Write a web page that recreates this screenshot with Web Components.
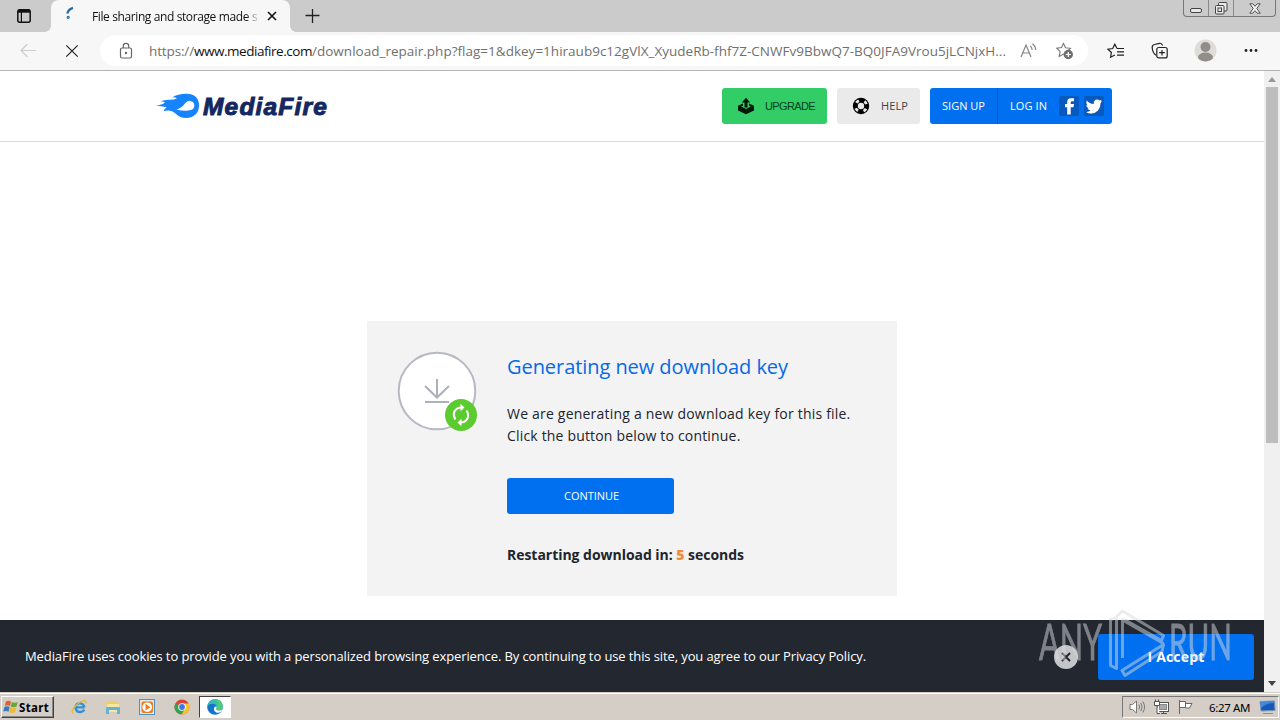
<!DOCTYPE html>
<html lang="en">
<head>
<meta charset="utf-8">
<title>File sharing and storage made simple</title>
<style>
  html, body { margin: 0; height: 720px; overflow: hidden; }
  body { font-family: "Open Sans", "Noto Sans", sans-serif; background: #fff; }
</style>
</head>
<body>
<desktop-shell>
  <browser-tabs slot="window"></browser-tabs>
  <browser-toolbar slot="window"></browser-toolbar>
  <web-view slot="window">
    <site-header></site-header>
    <key-card>
      <span slot="title">Generating new download key</span>
      <fit-text slot="body" width="343.5">We are generating a new download key for this file.</fit-text>
      <fit-text slot="body" width="233.5">Click the button below to continue.</fit-text>
      <span slot="action">CONTINUE</span>
    </key-card>
    <cookie-bar slot="footer"></cookie-bar>
  </web-view>
  <task-bar slot="taskbar"></task-bar>
  <run-watermark slot="overlay"></run-watermark>
</desktop-shell>

<template id="desktop-shell">
  <style>
    :host { display: flex; flex-direction: column; width: 1280px; height: 720px; position: relative; overflow: hidden; }
  </style>
  <slot name="window"></slot>
  <slot name="taskbar"></slot>
  <slot name="overlay"></slot>
</template>

<template id="browser-tabs">
  <style>
    :host { display: flex; height: 32px; background: #cbcbcb; color: #111; box-sizing: border-box; }
    .menu { padding: 8px 0 0 16px; width: 35px; }
    .tab {
      display: flex; align-items: center; position: relative; width: 239px; height: 32px; box-sizing: border-box;
      padding: 0 12px 0 14px; background: #f7f7f7; border-radius: 8px 8px 0 0; font-size: 12px;
    }
    .tab::before, .tab::after {
      content: ""; position: absolute; bottom: 0; width: 6px; height: 6px;
      background: radial-gradient(circle at 0 0, transparent 5.5px, #f7f7f7 6px);
    }
    .tab::before { left: -6px; }
    .tab::after { right: -6px; transform: scaleX(-1); }
    .title { width: 166px; margin-left: 13px; overflow: hidden; white-space: nowrap; display: flex; gap: 3px;
      -webkit-mask-image: linear-gradient(90deg, #000 154px, transparent 168px); }
    .spin { margin-top: -4px; }
    .close { margin-left: 8px; }
    .plus { margin: 8px 0 0 15px; }
    .controls { display: flex; margin-left: auto; margin-right: 4px; height: 17px; box-sizing: border-box;
      border: 1px solid #777; border-top: 0; border-radius: 0 0 4px 4px; }
    .controls span { display: flex; align-items: center; justify-content: center; width: 24px; }
    .controls span + span { border-left: 1px solid #8a8a8a; }
    .controls span:last-child { width: 41px; }
    svg { display: block; }
  </style>
  <div class="menu">
    <svg width="16" height="16" fill="none" stroke="#111" stroke-width="1.5"><rect x="1.8" y="1.8" width="12.4" height="12.4" rx="2"/><path d="M2 3.2h12" stroke-width="3"/><path d="M5.4 4v10" stroke-width="1.2"/></svg>
  </div>
  <div class="tab">
    <svg class="spin" width="14" height="16" fill="none" stroke="#2b6ca0" stroke-width="2.4"><path d="M8 1.800Q3.500 3 2.300 7.500"/><circle cx="3.200" cy="11.300" r=".6" stroke-width="2"/></svg>
    <div class="title"><fit-text width="157">File sharing and storage made</fit-text><span>simple</span></div>
    <svg class="close" width="12" height="12" stroke="#111" stroke-width="1.600"><path d="M2 2l8 8M10 2l-8 8"/></svg>
  </div>
  <svg class="plus" width="16" height="16" stroke="#222" stroke-width="1.3"><path d="M7.500 1v14M.5 7.500h14"/></svg>
  <div class="controls">
    <span><svg width="12" height="10"><rect x=".5" y="5.5" width="11" height="4" rx="1.5" fill="#e8e8e8" stroke="#444"/></svg></span>
    <span><svg width="14" height="13" fill="#e8e8e8" stroke="#444"><rect x="4.5" y=".5" width="8.5" height="8.5" rx="1"/><rect x="1.5" y="3.5" width="8.5" height="8.5" rx="1"/><rect x="4" y="6" width="3.5" height="3.5"/></svg></span>
    <span><svg width="12" height="11"><path d="M.8.8h3L6 3.3 8.2.8h3L7.8 5.5l3.400 4.700h-3L6 7.700 3.800 10.200h-3L4.200 5.500z" fill="#f0f0f0" stroke="#444" stroke-width=".9"/></svg></span>
  </div>
</template>

<template id="browser-toolbar">
  <style>
    :host { display: flex; align-items: center; height: 39px; box-sizing: border-box; padding: 0 0 1px 20px;
      background: #f7f7f7; border-bottom: 1px solid #b6b6b6; }
    .stop { margin-left: 29px; }
    .address { display: flex; align-items: center; width: 988px; height: 31px; box-sizing: border-box; margin-left: 21px;
      padding-left: 18px; border-radius: 16px; background: #fff; font-size: 13.5px; color: #707070; white-space: nowrap; }
    .lock { margin-right: 15px; }
    .host { color: #111; }
    .aloud { margin-left: 14px; }
    .star { margin-left: 18px; }
    .fav { margin-left: 19px; }
    .coll { margin-left: 26px; }
    .user { margin-left: 25px; }
    .more { margin-left: 26px; }
    svg { display: block; flex: none; }
  </style>
  <svg width="16" height="16" fill="none" stroke="#cdcdcd" stroke-width="1.2"><path d="M16 7.5H1M7.5 1L1 7.5 7.5 14"/></svg>
  <svg class="stop" width="14" height="14" stroke="#222" stroke-width="1.200"><path d="M1.300 1.300l11.400 11.400M12.700 1.300L1.300 12.700"/></svg>
  <div class="address">
    <svg class="lock" width="16" height="18" fill="none" stroke="#666" stroke-width="1.200"><rect x="2.500" y="6" width="11" height="10" rx="1.500"/><path d="M5.300 6V4a2.700 2.700 0 0 1 5.400 0v2"/><circle cx="8" cy="11" r=".6" fill="#666"/></svg>
    <fit-text width="45">https://</fit-text><fit-text class="host" width="118">www.mediafire.com</fit-text><fit-text width="694">/download_repair.php?flag=1&amp;dkey=1hiraub9c12gVlX_XyudeRb-fhf7Z-CNWFv9BbwQ7-BQ0JFA9Vrou5jLCNjxH...</fit-text>
    <svg class="aloud" width="18" height="16" fill="none" stroke="#858585" stroke-width="1.200"><path d="M1 14L6 2l5 12M2.800 10h6.500M10.300 3q1.800 1.500 1.800 4M12.500.8q3.300 2.500 3.200 6.300"/></svg>
    <svg class="star" width="18" height="18"><path d="M7.500 1.500l2 4.200 4.900.6-3.500 3.300.8 4.700-4.200-2.200-4.300 2.300.9-4.800L.8 6.200l4.700-.6z" fill="#fff" stroke="#777" stroke-width="1.100"/><circle cx="12.300" cy="12.500" r="4.700" fill="#707070"/><path d="M12.300 10v5M9.800 12.500h5" stroke="#fff" stroke-width="1.200"/></svg>
  </div>
  <svg class="fav" width="18" height="16" fill="none" stroke="#222" stroke-width="1.200"><path d="M10 5.500L7.800 1.200 5.700 5.500.9 6.200l3.500 3.300-.8 4.700 4.300-2.200M10 5.500h7M10 8.800h7M10 12.200h7"/></svg>
  <svg class="coll" width="18" height="18" fill="none" stroke="#222" stroke-width="1.200"><path d="M5 13.200Q1.500 11 1.200 5.500 1 3 3.500 2.500l5-1.200q2-.4 3.200 2.200"/><rect x="5.800" y="5.500" width="10.400" height="10.400" rx="2" fill="#f7f7f7"/><path d="M11 8v5.500M8.200 10.700h5.600"/></svg>
  <svg class="user" width="23" height="23"><circle cx="11.500" cy="11.500" r="11" fill="#dfddda"/><circle cx="11.500" cy="8" r="5" fill="#918d88"/><ellipse cx="11.500" cy="18" rx="7.500" ry="4.400" fill="#918d88"/></svg>
  <svg class="more" width="16" height="5" fill="#222"><circle cx="3" cy="2.500" r="1.400"/><circle cx="8" cy="2.500" r="1.400"/><circle cx="13" cy="2.500" r="1.400"/></svg>
</template>

<template id="web-view">
  <style>
    :host { display: grid; grid-template-columns: 1264px 16px; height: 621px; background: #fff; }
    .page { display: flex; flex-direction: column; height: 621px; }
    .bar { display: flex; flex-direction: column; align-items: center; background: #f0f0f0; }
    .thumb { width: 12px; height: 356px; margin: 5px 0 auto; background: #bdbdbd; }
    .up { margin-top: 6px; }
    .down { margin-bottom: 6px; }
    svg { display: block; }
  </style>
  <div class="page"><slot></slot><slot name="footer"></slot></div>
  <div class="bar">
    <svg class="up" width="8" height="5" fill="#999"><path d="M0 5l4-5 4 5z"/></svg>
    <div class="thumb"></div>
    <svg class="down" width="8" height="5" fill="#444"><path d="M0 0l4 5 4-5z"/></svg>
  </div>
</template>

<template id="site-header">
  <style>
    :host { display: flex; align-items: flex-start; height: 71px; box-sizing: border-box; border-bottom: 1px solid #dcdcdc;
      padding: 17px 152px 0 155px; font-size: 11px; }
    .logo { display: flex; margin: 5px auto 0 0; }
    .name { font: italic 700 24.500px/28px "Liberation Sans", sans-serif; color: #142760; margin: 0 0 0 3px;
      -webkit-text-stroke: 1px #142760; }
    .btn { display: flex; align-items: center; height: 36px; border-radius: 3px; box-sizing: border-box; }
    .upgrade { width: 105px; padding-left: 15px; background: #32cd67; color: #073f1a; font-family: "Liberation Sans", sans-serif; }
    .help { width: 83px; padding-left: 15px; margin: 0 10px; background: #eaeaea; color: #3c434d; }
    .upgrade svg, .help svg { margin-right: 10px; }
    .help fit-text, .auth fit-text { margin-bottom: 2px; }
    .auth { width: 182px; background: #0070f0; color: #fff; }
    .auth span { display: flex; align-items: center; height: 36px; box-sizing: border-box; }
    .sign { width: 68px; padding-left: 12px; border-right: 1px solid #0058c4; }
    .log { padding-left: 12px; margin-right: 12px; }
    .auth svg { margin-right: 5px; }
    svg { display: block; flex: none; }
  </style>
  <div class="logo">
    <svg width="45" height="26"><path fill="#1683ff" fill-rule="evenodd" d="M.5 12.500Q7 12 10 9.500 8 8.300 5.500 8.300 10 6.500 15.500 6.800 19 6.800 22 5.200 19.500 4 17 4.500 23 .8 31 .8 37 .6 41 4 44 7 44 12.500 44 18 40.500 21.500 36.500 25 31 25 25 25 20.500 20.500 16.500 17 13 17.500q-3 0-4.500.8.8-2.700 3.200-4Q6 13 .5 12.500zM21.500 16.500q5.500-2 8-5.500 3-4 6.500-3 3.300 1 3.300 4.500 0 3.600-3.600 4.600Q30 18.500 21.500 16.500z"/></svg>
    <fit-text class="name" width="125">MediaFire</fit-text>
  </div>
  <div class="btn upgrade">
    <svg width="18" height="18" fill="#001807"><path d="M9 .8L4.800 5.500h2.700v5h3v-5h2.700z"/><path d="M6 6.500L1 8.800v4.700L9 17.300l8-3.800V8.800l-5-2.300v2.200l1.800.8L9 12 4.200 9.500 6 8.700z"/></svg>
    <fit-text width="50">UPGRADE</fit-text>
  </div>
  <div class="btn help">
    <svg width="19" height="18"><circle cx="9" cy="9" r="8.200" fill="#000"/><circle cx="9" cy="9" r="5.700" fill="none" stroke="#eaeaea" stroke-width="2.700" stroke-dasharray="3.200 5.753" stroke-dashoffset="-2.900"/><circle cx="9" cy="9" r="3.200" fill="#eaeaea"/></svg>
    <fit-text width="27">HELP</fit-text>
  </div>
  <div class="btn auth">
    <span class="sign"><fit-text width="43">SIGN UP</fit-text></span>
    <span class="log"><fit-text width="37">LOG IN</fit-text></span>
    <svg width="20" height="20"><rect width="20" height="20" rx="2" fill="#0859bd"/><path d="M8.200 18.500v-7.300H6V8h2.200V6q0-3.700 3.700-3.700H15v3h-2q-1.300 0-1.300 1.200V8H15l-.5 3.200h-2.800v7.300z" fill="#fff"/></svg>
    <svg width="20" height="20"><rect width="20" height="20" rx="2" fill="#0859bd"/><path d="M18 5.300l-1.500 1.900q.2 4.500-2.500 7.400-3.300 3.500-8 2.900-2.300-.2-4-1.500 2.700.1 4.500-1.400-2.200-.3-3-2.300h1.300Q2.300 11.200 2.200 9q.7.400 1.400.4Q1.500 7.300 2.800 4.500 5.500 7.900 9.700 8q-.5-3 1.800-4.200 2.300-1 4.200.7L17.800 3.700l-1.300 1.900z" fill="#fff"/></svg>
  </div>
</template>

<template id="key-card">
  <style>
    :host { display: flex; width: 530px; height: 275px; margin: 179px auto auto 367px; box-sizing: border-box;
      padding: 30px 0 0 30px; background: #f3f3f3; color: #20242c; }
    .icon { flex: none; width: 110px; }
    .text { display: flex; flex-direction: column; align-items: flex-start; font-size: 14px; line-height: 22px; }
    h1 { margin: 2px 0 22px; font-size: 20px; font-weight: 400; line-height: 28px; color: #0669e8; }
    ::slotted([slot="body"]) { height: 22px; }
    .button { display: flex; align-items: center; justify-content: center; width: 167px; height: 36px; margin: 31px 0 30px;
      padding: 0 0 0 2px; border-radius: 3px; background: #0070f0; color: #fff; font-size: 11px; box-sizing: border-box; }
    .count { font-weight: 700; }
    b { color: #f28a3c; }
  </style>
  <svg class="icon" width="82" height="82"><circle cx="40" cy="40" r="38.300" fill="#fff" stroke="#b6b9c4" stroke-width="2"/><path d="M40 28v18M28 35l12 11.500L52 35M28 51h24" fill="none" stroke="#abb0bd" stroke-width="2"/><circle cx="64" cy="64" r="16" fill="#5bcb30"/><g fill="none" stroke="#fff" stroke-width="2"><path d="M58.300 68.500Q55 62 59 58.500q2-2 5-2M69.700 59.500Q73 66 69 69.500q-2 2-5 2"/></g><path d="M63.500 52.800l4 3.700-4 3.700zM64.500 67.800l-4 3.700 4 3.700z" fill="#fff"/></svg>
  <div class="text">
    <h1><fit-text width="281"><slot name="title"></slot></fit-text></h1>
    <slot name="body"></slot>
    <div class="button"><fit-text width="55"><slot name="action"></slot></fit-text></div>
    <div class="count"><fit-text width="237">Restarting download in: <b>5</b> seconds</fit-text></div>
  </div>
</template>

<template id="cookie-bar">
  <style>
    :host { display: flex; align-items: center; flex: none; height: 72px; box-sizing: border-box; padding: 1px 10px 0 25px;
      background: #232830; color: #fff; font-size: 13px; }
    .note { margin-bottom: 2px; }
    .close { margin-left: auto; }
    .accept { display: flex; align-items: center; justify-content: center; width: 156px; height: 46px; margin-left: 20px;
      border-radius: 3px; background: #0070f0; font-size: 14px; font-weight: 700; }
  </style>
  <fit-text class="note" width="841">MediaFire uses cookies to provide you with a personalized browsing experience. By continuing to use this site, you agree to our Privacy Policy.</fit-text>
  <svg class="close" width="24" height="24"><circle cx="12" cy="12" r="12" fill="#c3c5c8"/><path d="M8 8l8 8M16 8l-8 8" stroke="#20242c" stroke-width="2"/></svg>
  <div class="accept"><fit-text width="57">I Accept</fit-text></div>
</template>

<template id="task-bar">
  <style>
    :host { display: flex; align-items: center; height: 28px; box-sizing: border-box; padding: 1px 1px 0; border-top: 1px solid #d4d0c8;
      background: #d4cec6; box-shadow: inset 0 1px #fff; font: 11.500px "Noto Sans", sans-serif; color: #000; }
    .start { display: flex; align-items: center; width: 53px; height: 22px; box-sizing: border-box; padding-left: 1px;
      border: 1px solid; border-color: #fff #404040 #404040 #fff; box-shadow: inset -1px -1px #888; font-weight: 700; }
    .apps { display: flex; align-items: center; gap: 18px; margin-left: 17px; }
    .active { display: flex; align-items: center; justify-content: center; width: 32px; height: 22px; margin-left: 9px;
      box-sizing: border-box; background: #fff; border: 1px solid; border-color: #404040 #fff #fff #404040; }
    .tray { display: flex; align-items: center; width: 157px; height: 22px; margin-left: auto; box-sizing: border-box;
      padding-left: 6px; border: 1px solid; border-color: #777 #fff #fff #777; }
    .tray svg + svg { margin-left: 7px; }
    .clock { margin-left: 15px; }
    .tray .desk { margin-left: 9px; }
    svg { display: block; flex: none; }
  </style>
  <div class="start">
    <svg width="16" height="16"><path d="M3 2.500q3-1.500 5 .2L7 7.200Q4.500 5.500 1.800 7z" fill="#e4602a"/><path d="M8.800 3q2.700 1.500 6 0l-1.300 4.600q-3 1.400-5.700-.2z" fill="#68a83a"/><path d="M1.500 8q2.700-1.500 5.200.2l-1.200 4.600Q3 11.200.2 12.600z" fill="#347cc2"/><path d="M7.500 8.500q2.800 1.600 5.700.2l-1.300 4.600q-3 1.500-5.700-.3z" fill="#f2b92e"/></svg>
    <fit-text width="30">Start</fit-text>
  </div>
  <div class="apps">
    <svg width="16" height="16" fill="none"><path d="M13.500 8.300H4.500Q5 4.300 8.500 4.300q4 0 5 4M4.500 8.500q.5 4.500 4.500 4.500 3 0 4.200-2.500" stroke="#328fd3" stroke-width="2.300"/><path d="M2 14.500Q-.5 12 5 6.500 11 1 14.200 1.800q1.200.6.300 2.700" stroke="#e5b92f" stroke-width="1.300"/></svg>
    <svg width="16" height="16"><path d="M1 3h5l1-1h6v4H1z" fill="#edcf6a"/><path d="M2 5h12v8H2z" fill="#f6e6a2"/><path d="M1 15V9q0-1 1-1h12q1 0 1 1v6h-3v-4H4v4z" fill="#63b4d2"/></svg>
    <svg width="17" height="16"><rect x=".5" y=".5" width="15" height="15" fill="#d7e9f7" stroke="#4f91c2"/><rect x="2.500" y="2.500" width="11.500" height="11.500" rx="2" fill="#ee7d1b"/><circle cx="8.200" cy="8.200" r="4.800" fill="#fff"/><path d="M6.500 4.800l5 3.400-5 3.400z" fill="#ee7d1b"/></svg>
    <svg width="16" height="16"><circle cx="8" cy="8" r="7.500" fill="#e04132"/><path d="M8 8L1.500 4.200A7.500 7.500 0 0 0 7.500 15.500l4-5.500z" fill="#36a14d"/><path d="M8 4.500h6.600A7.500 7.500 0 0 1 7.500 15.500L11.200 9.500z" fill="#f6c42c"/><circle cx="8" cy="8" r="3.800" fill="#fff"/><circle cx="8" cy="8" r="2.900" fill="#3a79e8"/></svg>
  </div>
  <div class="active">
    <svg width="16" height="16"><circle cx="8" cy="8" r="7.800" fill="#1575ca"/><path d="M.4 7Q1.500.2 8.500.2q7 .5 7.300 7 0 4-4.300 4-3 0-2.200-2.200Q10.500 6 7 5 3 4 .4 7z" fill="#35bfb4"/><path d="M8 .2q7 0 7.800 7 0 4-4 4-3 0-2.500-2 3.700-4.500-1.300-9z" fill="#51cb79"/><path d="M9.300 9q-1 2.200 2.200 2.500 2 .2 3.500-1-1 4-5.200 3.200Q6 12 7.300 8.500 8 7 9.400 7.500q.5.500-.1 1.500z" fill="#fff"/></svg>
  </div>
  <div class="tray">
    <svg width="17" height="16" fill="#fff" stroke="#777"><path d="M1 5.500h2.500L7.500 2v12L3.500 10.500H1z"/><path d="M9.800 5.500q1.500 2.500 0 5M11.800 3.800q2.600 4.200 0 8.400M13.800 2.500q3.500 5.500 0 11" fill="none"/></svg>
    <svg width="17" height="16" stroke="#555"><rect x="4.500" y="3.500" width="11" height="9" fill="#fff"/><rect x="6.500" y="5.500" width="7" height="5" fill="#aaa" stroke="#888"/><path d="M8 14.500h6M10.500 13v1.500M1.500 2.500h5v4h-5zM2.500.5v2M5.500.5v2M4 6.500v8h3" fill="#fff"/></svg>
    <svg width="17" height="16" fill="#fff" stroke="#666"><path d="M2.500 1v14M2.500 2.500h6v6h-6M8.500 4.500h6.500l-2.500 4.500h-4"/></svg>
    <fit-text class="clock" width="41">6:27 AM</fit-text>
    <svg class="desk" width="17" height="16"><path d="M1 2.500L15.500 2l.5 9.500L2 12z" fill="#1858b6" stroke="#7297bf"/><path d="M2 9q6-5 13-5v-1.500L2 3z" fill="#3f88df"/><path d="M4 14.500h10" stroke="#8493a1"/></svg>
  </div>
</template>

<template id="run-watermark">
  <style>
    :host { display: block; position: absolute; left: 1036px; top: 606px; pointer-events: none; opacity: .5; }
    text { font: 400 51px Lato, sans-serif; fill: #d9dbdf; stroke: #d9dbdf; stroke-width: .8; }
    svg { display: block; }
  </style>
  <svg width="200" height="74">
    <text x="3" y="53.500" textLength="63" lengthAdjust="spacingAndGlyphs">ANY</text>
    <g fill="none" stroke="#d9dbdf" stroke-width="3" stroke-linejoin="round">
      <path d="M74.500 13.500v46l6 3V11.500zM86.500 52V14l41 23.500"/>
      <path d="M80.500 10.500l6-5.500 41 24.500-2 5-39-22"/>
      <path d="M127.500 38.500L86 64.500l3 5 37-24z"/>
    </g>
    <text x="133" y="53.500" textLength="63" lengthAdjust="spacingAndGlyphs">RUN</text>
  </svg>
</template>

<script>
  (function() {
    // Spreads a single line of text over the given width.
    class FitText extends HTMLElement {
      connectedCallback() {
        if (!this.shadowRoot) {
          this.attachShadow({ mode: 'open' }).innerHTML =
            '<style>:host { display: inline-block; flex: none; white-space: nowrap; } span { display: inline-block; }</style><span><slot></slot></span>';
        }
        this.fit();
        requestAnimationFrame(() => this.fit());
      }

      measure(spacing) {
        this.style.letterSpacing = `${spacing}px`;
        return this.shadowRoot.querySelector('span').getBoundingClientRect().width;
      }

      fit() {
        const target = Number(this.getAttribute('width'));
        const natural = this.measure(0);
        const glyphs = this.measure(1) - natural;

        this.style.width = `${target}px`;
        this.style.letterSpacing = glyphs > 0 ? `${(target - natural) / glyphs}px` : '';
      }
    }

    window.customElements.define('fit-text', FitText);

    const names = [
      'desktop-shell', 'browser-tabs', 'browser-toolbar', 'web-view', 'site-header',
      'key-card', 'cookie-bar', 'task-bar', 'run-watermark'
    ];

    names.forEach((name) => {
      const template = document.getElementById(name).content;

      window.customElements.define(name, class extends HTMLElement {
        constructor() {
          super();
          this.attachShadow({ mode: 'open' }).appendChild(document.importNode(template, true));
        }
      });
    });
  })();
</script>
</body>
</html>
